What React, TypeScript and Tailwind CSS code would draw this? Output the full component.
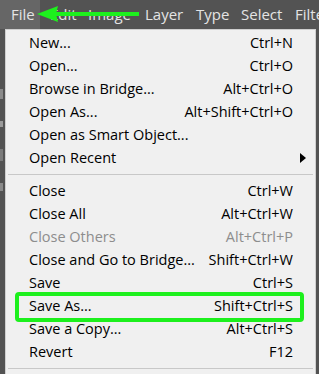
import React from "react";

type Item = { label: string; shortcut?: string; disabled?: boolean; submenu?: boolean } | "sep";

const items: Item[] = [
  { label: "New...", shortcut: "Ctrl+N" },
  { label: "Open...", shortcut: "Ctrl+O" },
  { label: "Browse in Bridge...", shortcut: "Alt+Ctrl+O" },
  { label: "Open As...", shortcut: "Alt+Shift+Ctrl+O" },
  { label: "Open as Smart Object..." },
  { label: "Open Recent", submenu: true },
  "sep",
  { label: "Close", shortcut: "Ctrl+W" },
  { label: "Close All", shortcut: "Alt+Ctrl+W" },
  { label: "Close Others", shortcut: "Alt+Ctrl+P", disabled: true },
  { label: "Close and Go to Bridge...", shortcut: "Shift+Ctrl+W" },
  { label: "Save", shortcut: "Ctrl+S" },
  { label: "Save As...", shortcut: "Shift+Ctrl+S" },
  { label: "Save a Copy...", shortcut: "Alt+Ctrl+S" },
  { label: "Revert", shortcut: "F12" },
  "sep",
];

export default function App() {
  return (
    <div className="relative w-[319px] h-[374px] overflow-hidden bg-[#535353] font-['Open_Sans',sans-serif]">
      {/* Menu bar */}
      <div className="flex h-[29px] items-center text-[15px] text-[#e4e4e4] whitespace-nowrap">
        <div className="h-full w-[40px] shrink-0 bg-[#666666] flex items-center pl-[11px]">File</div>
        <div className="w-[48px] shrink-0 pl-[10px]">Edit</div>
        <div className="w-[57px] shrink-0">Image</div>
        <div className="w-[51px] shrink-0">Layer</div>
        <div className="w-[45px] shrink-0">Type</div>
        <div className="w-[54px] shrink-0">Select</div>
        <div className="shrink-0">Filter</div>
      </div>

      {/* Body */}
      <div className="flex h-[345px]">
        <div className="w-[5px] bg-[#535353] flex flex-col gap-[22px] pt-[60px]">
          <div className="h-[10px] w-[3px] bg-[#8a8a8a]" />
          <div className="h-[6px] w-[3px] bg-[#9a9a9a]" />
          <div className="h-[12px] w-[3px] bg-[#7a7a7a]" />
          <div className="h-[8px] w-[3px] bg-[#8a8a8a]" />
        </div>
        <div className="flex-1 bg-[#f0f0f0] border border-[#cfcfcf] border-b-0 pt-px">
          {items.map((it, i) =>
            it === "sep" ? (
              <div key={i} className="h-[10px] flex items-center px-[2px]">
                <div className="h-px w-full bg-[#c8c8c8]" />
              </div>
            ) : (
              <div
                key={i}
                className={`flex items-center h-[23px] pl-[23px] pr-[22px] text-[14.5px] whitespace-nowrap ${
                  it.disabled ? "text-[#8d8d8d]" : "text-black"
                }`}
              >
                <span className="flex-1">{it.label}</span>
                {it.shortcut && <span>{it.shortcut}</span>}
                {it.submenu && (
                  <svg width="6" height="10" viewBox="0 0 6 10" className="mr-[-13px]">
                    <path d="M0 0 L6 5 L0 10 Z" fill="#000" />
                  </svg>
                )}
              </div>
            )
          )}
        </div>
        <div className="w-[3px] bg-[#535353]" />
      </div>

      {/* Green highlight box */}
      <div className="absolute left-[15px] top-[292px] w-[289px] h-[30px] border-[4px] border-[#1df01d] rounded-[4px]" />

      {/* Green arrow */}
      <svg className="absolute left-0 top-0" width="160" height="29" viewBox="0 0 160 29">
        <line x1="52" y1="14" x2="139" y2="14" stroke="#1df01d" strokeWidth="4" />
        <path d="M37 14 L58 6 L56 14 L58 22 Z" fill="#1df01d" />
      </svg>
    </div>
  );
}
